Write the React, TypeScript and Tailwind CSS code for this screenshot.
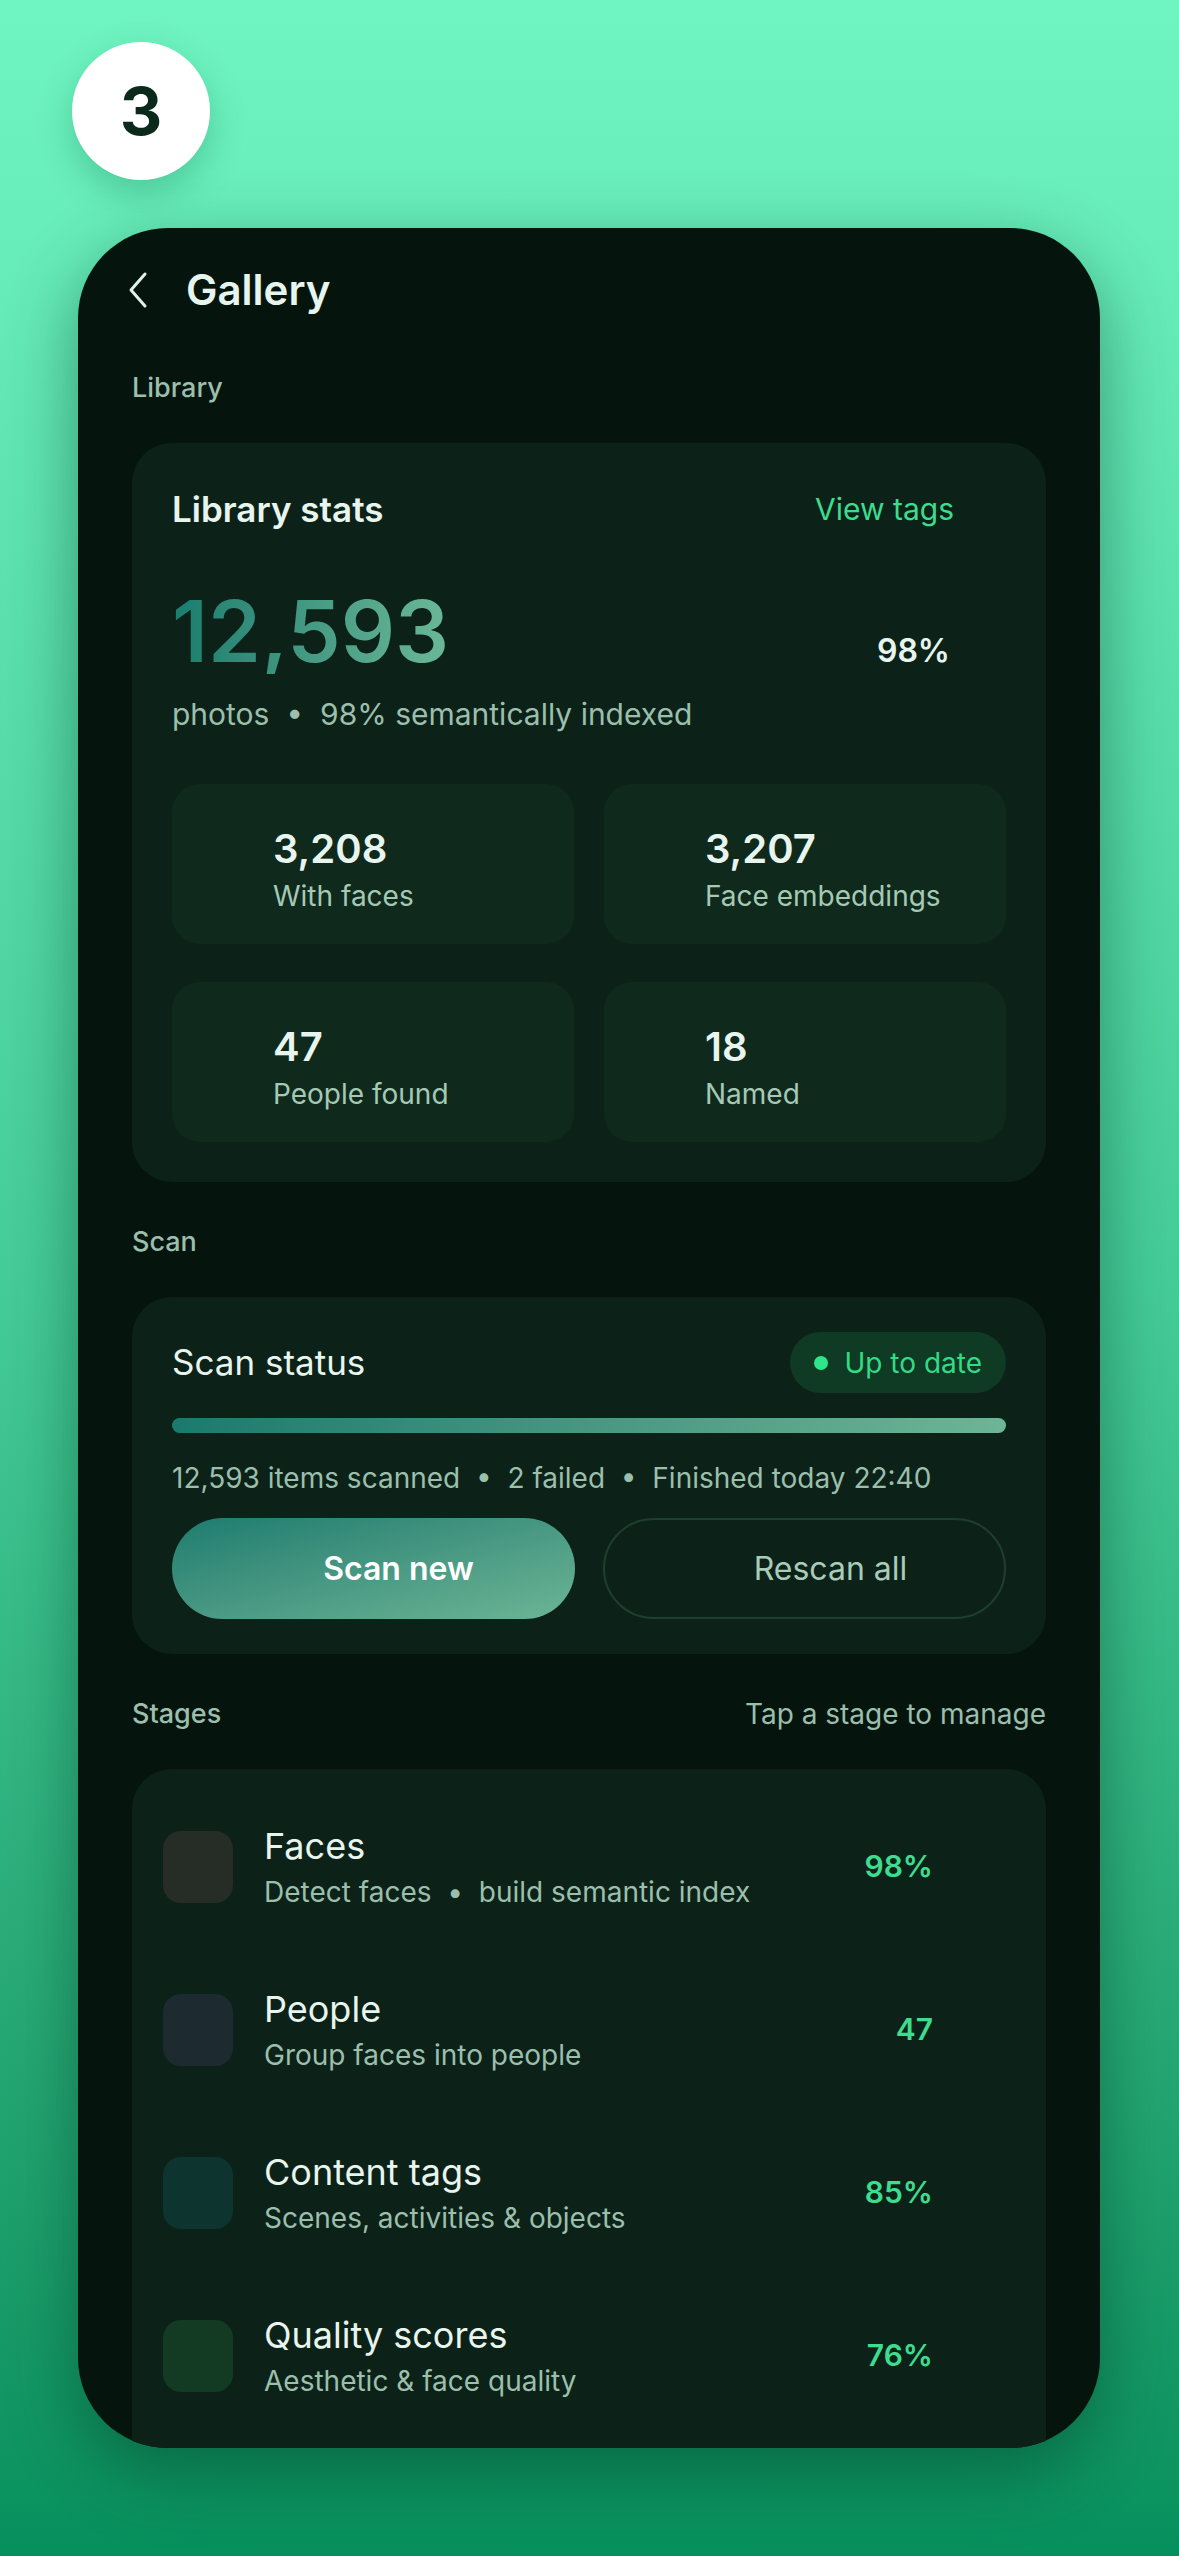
const stats = [
  { value: '3,208', label: 'With faces' },
  { value: '3,207', label: 'Face embeddings' },
  { value: '47', label: 'People found' },
  { value: '18', label: 'Named' },
]

const stages = [
  { title: 'Faces', sub: 'Detect faces  •  build semantic index', value: '98%', swatch: 'bg-[#262c26]' },
  { title: 'People', sub: 'Group faces into people', value: '47', swatch: 'bg-[#1d2b30]' },
  { title: 'Content tags', sub: 'Scenes, activities & objects', value: '85%', swatch: 'bg-[#0e3430]' },
  { title: 'Quality scores', sub: 'Aesthetic & face quality', value: '76%', swatch: 'bg-[#133a23]' },
]

export default function App() {
  return (
    <div className="w-[1179px] h-[2556px] overflow-hidden bg-gradient-to-b from-[#6ff5c2] via-[#45cd99] to-[#06905d] font-['Inter',sans-serif]">
      {/* Step badge */}
      <div className="pt-[42px] pl-[72px]">
        <div className="w-[138px] h-[138px] rounded-full bg-white flex items-center justify-center shadow-[0_14px_34px_rgba(0,90,55,0.25)]">
          <span className="text-[66px] font-bold text-[#0b2a1c] leading-none">3</span>
        </div>
      </div>

      {/* Phone */}
      <div className="mt-[48px] ml-[78px] w-[1022px] h-[2220px] rounded-[90px] overflow-hidden bg-[#05150e] shadow-[0_24px_70px_rgba(0,50,30,0.45)]">
        {/* Header */}
        <div className="pt-[32px] pl-[48px] h-[92px] flex items-center gap-[36px]">
          <svg width="24" height="40" viewBox="0 0 24 40" fill="none" stroke="#dff2e8" strokeWidth="3" strokeLinecap="round" strokeLinejoin="round">
            <path d="M19 4 L5 20 L19 36" />
          </svg>
          <h1 className="text-[42px] font-semibold text-[#e6f6ee] leading-none">Gallery</h1>
        </div>

        <div className="px-[54px]">
          {/* Library */}
          <div className="mt-[51px] text-[27px] font-medium text-[#9bbfac] leading-[34px]">Library</div>
          <div className="mt-[38px] rounded-[40px] bg-[#0c2218] p-[40px]">
            <div className="h-[52px] flex items-center justify-between">
              <span className="text-[35px] font-semibold text-[#e8f5ee]">Library stats</span>
              <span className="mr-[52px] text-[30px] text-[#3ddc8e]">View tags</span>
            </div>
            <div className="mt-[54px] flex items-baseline justify-between">
              <span className="text-[85px] leading-none font-semibold bg-gradient-to-r from-[#187d6f] to-[#6ab898] bg-clip-text text-transparent">
                12,593
              </span>
              <span className="mr-[56px] text-[32px] font-semibold text-[#e8f5ee]">98%</span>
            </div>
            <div className="mt-[20px] text-[30px] leading-[38px] text-[#9bbfac]">
              photos&nbsp;&nbsp;•&nbsp;&nbsp;98% semantically indexed
            </div>
            <div className="mt-[51px] grid grid-cols-2 gap-x-[30px] gap-y-[38px]">
              {stats.map((s) => (
                <div key={s.label} className="h-[160px] rounded-[28px] bg-[#0f2a1d] pl-[101px] pt-[41px]">
                  <div className="text-[40px] leading-[48px] font-semibold text-[#e8f5ee]">{s.value}</div>
                  <div className="mt-[5px] text-[28px] leading-[36px] text-[#a5c9b5]">{s.label}</div>
                </div>
              ))}
            </div>
          </div>

          {/* Scan */}
          <div className="mt-[43px] text-[27px] font-medium text-[#9bbfac] leading-[34px]">Scan</div>
          <div className="mt-[38px] rounded-[40px] bg-[#0c2218] px-[40px] pt-[35px] pb-[35px]">
            <div className="h-[61px] flex items-center justify-between">
              <span className="text-[35px] text-[#e8f5ee]">Scan status</span>
              <span className="h-[61px] rounded-full bg-[#0f3a24] pl-[24px] pr-[24px] flex items-center gap-[17px]">
                <span className="w-[14px] h-[14px] rounded-full bg-[#2ee58a]" />
                <span className="text-[28px] text-[#33db86]">Up to date</span>
              </span>
            </div>
            <div className="mt-[25px] h-[15px] rounded-full bg-gradient-to-r from-[#1a7a6e] to-[#6cb596]" />
            <div className="mt-[27px] text-[28px] leading-[36px] text-[#9bbfac]">
              12,593 items scanned&nbsp;&nbsp;•&nbsp;&nbsp;2 failed&nbsp;&nbsp;•&nbsp;&nbsp;Finished today 22:40
            </div>
            <div className="mt-[22px] grid grid-cols-2 gap-[28px]">
              <button className="h-[101px] rounded-full bg-gradient-to-br from-[#1b7c6f] to-[#6cb596] pl-[50px] flex items-center justify-center text-[32px] font-semibold text-white">
                Scan new
              </button>
              <button className="h-[101px] rounded-full border-2 border-[#1f3f2e] pl-[52px] flex items-center justify-center text-[32px] text-[#a9cbb9]">
                Rescan all
              </button>
            </div>
          </div>

          {/* Stages */}
          <div className="mt-[43px] flex items-center justify-between leading-[34px]">
            <span className="text-[27px] font-medium text-[#9bbfac]">Stages</span>
            <span className="text-[28px] text-[#9bbfac]">Tap a stage to manage</span>
          </div>
          <div className="mt-[38px] rounded-[40px] bg-[#0c2218] pl-[31px] pr-[113px] pt-[16px] pb-[40px]">
            {stages.map((s) => (
              <div key={s.title} className="h-[163px] flex items-center">
                <div className={`w-[70px] h-[72px] rounded-[18px] ${s.swatch}`} />
                <div className="ml-[31px] flex-1">
                  <div className="text-[36px] leading-[44px] text-[#e8f5ee]">{s.title}</div>
                  <div className="mt-[6px] text-[28px] leading-[36px] text-[#9bbfac] whitespace-pre">{s.sub}</div>
                </div>
                <div className="text-[30px] font-semibold text-[#3ddc8e]">{s.value}</div>
              </div>
            ))}
          </div>
        </div>
      </div>
    </div>
  )
}
